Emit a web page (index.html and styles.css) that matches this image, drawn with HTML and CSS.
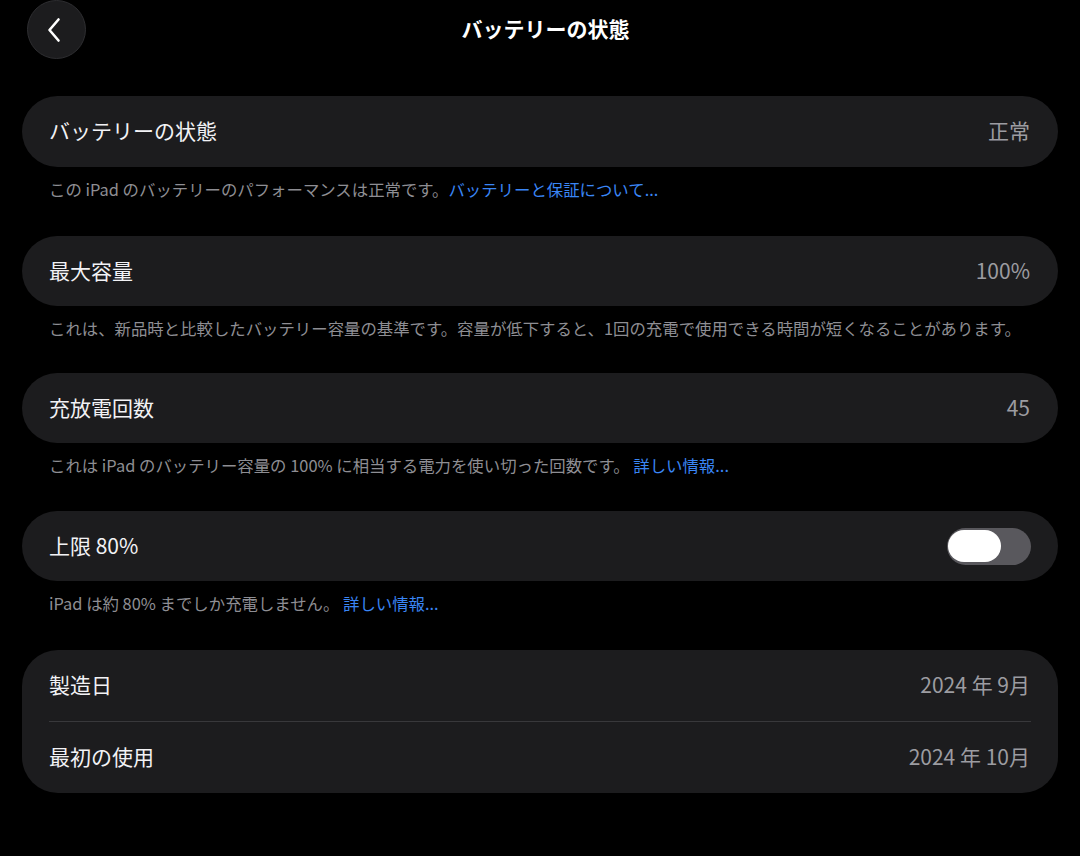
FILE: index.html
```html
<!DOCTYPE html>
<html lang="ja">
<head>
  <meta charset="UTF-8" />
  <meta name="viewport" content="width=device-width, initial-scale=1.0"/>
  <title>バッテリーの状態</title>
  <link rel="stylesheet" href="styles.css">
</head>
<body>
  <div class="page">

    <!-- Header -->
    <div class="header">
      <button class="back-btn" aria-label="戻る">
        <svg width="22" height="26" viewBox="0 0 22 26">
          <path d="M14.5 2.5 L5.5 13 L14.5 23.5" fill="none" stroke="#fff" stroke-width="2.6" stroke-linecap="round" stroke-linejoin="round"/>
        </svg>
      </button>
      <h1 class="title">バッテリーの状態</h1>
      <div></div>
    </div>

    <!-- Battery health -->
    <div class="card">
      <div class="row row-tall">
        <span class="label">バッテリーの状態</span>
        <span class="value">正常</span>
      </div>
    </div>
    <p class="note note-long">この iPad のバッテリーのパフォーマンスは正常です。<a class="link" href="#">バッテリーと保証について...</a></p>

    <!-- Max capacity -->
    <div class="card">
      <div class="row">
        <span class="label">最大容量</span>
        <span class="value">100%</span>
      </div>
    </div>
    <p class="note note-short">これは、新品時と比較したバッテリー容量の基準です。容量が低下すると、1回の充電で使用できる時間が短くなることがあります。</p>

    <!-- Cycle count -->
    <div class="card">
      <div class="row">
        <span class="label">充放電回数</span>
        <span class="value">45</span>
      </div>
    </div>
    <p class="note">これは iPad のバッテリー容量の 100% に相当する電力を使い切った回数です。 <a class="link" href="#">詳しい情報...</a></p>

    <!-- Limit -->
    <div class="card">
      <div class="row">
        <span class="label">上限 80%</span>
        <div class="toggle"><div class="knob"></div></div>
      </div>
    </div>
    <p class="note note-long">iPad は約 80% までしか充電しません。 <a class="link" href="#">詳しい情報...</a></p>

    <!-- Dates -->
    <div class="card">
      <div class="row row-tall">
        <span class="label">製造日</span>
        <span class="value">2024 年 9月</span>
      </div>
      <div class="divider"></div>
      <div class="row row-tall">
        <span class="label">最初の使用</span>
        <span class="value">2024 年 10月</span>
      </div>
    </div>

  </div>
</body>
</html>
```

FILE: styles.css
```css
body {
  margin: 0;
  background: #000;
  font-family: "Noto Sans CJK JP", "Noto Sans", sans-serif;
  color: #f2f2f5;
}

.page {
  padding: 0 22px;
}

.header {
  height: 96px;
  display: grid;
  grid-template-columns: 1fr auto 1fr;
  align-items: start;
}

.back-btn {
  width: 59px;
  height: 59px;
  margin-left: 5px;
  border-radius: 50%;
  background: #1c1c1e;
  border: 1px solid #2e2e31;
  display: flex;
  align-items: center;
  justify-content: center;
  padding: 0 3px 0 0;
  cursor: pointer;
}

.title {
  margin: 0;
  padding-left: 11px;
  height: 57px;
  line-height: 57px;
  font-size: 21px;
  font-weight: 700;
  color: #fff;
}

.card {
  background: #1c1c1e;
  border-radius: 36px;
  padding: 0 27px;
}

.row {
  height: 70px;
  box-sizing: border-box;
  padding-bottom: 3px;
  display: flex;
  align-items: center;
  justify-content: space-between;
}

.row-tall {
  height: 71px;
}

.label {
  font-size: 21px;
  color: #f2f2f5;
}

.value {
  font-size: 21px;
  color: #9c9ca1;
  margin-right: 1px;
}

.divider {
  height: 1px;
  background: #38383b;
}

.note {
  margin: 0;
  height: 68px;
  box-sizing: border-box;
  padding: 11px 27px 0;
  line-height: 22px;
  font-size: 16.4px;
  color: #8e8e93;
}

.note-short {
  height: 67px;
}

.note-long {
  height: 69px;
}

.link {
  color: #3a86f5;
  text-decoration: none;
}

.toggle {
  width: 84px;
  height: 37px;
  margin-top: 3px;
  border-radius: 19px;
  background: #59585d;
  position: relative;
}

.knob {
  position: absolute;
  top: 2.5px;
  left: 1px;
  width: 53px;
  height: 32px;
  border-radius: 16px;
  background: #fff;
}
```
